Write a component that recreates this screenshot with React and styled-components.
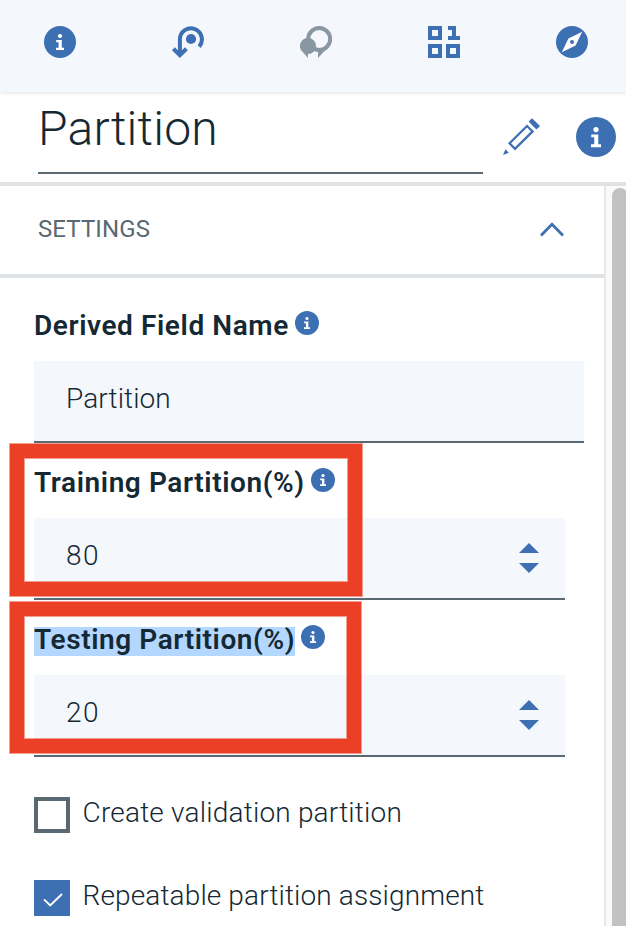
import React from 'react';
import styled, { createGlobalStyle } from 'styled-components';

const blue = '#3d70b2';
const ink = '#152935';
const slate = '#5a6872';
const mist = '#f4f7fb';
const rule = '#dfe3e6';

const Global = createGlobalStyle`
  *, *::before, *::after { box-sizing: border-box; }
  body { margin: 0; background: #fff; overflow: hidden; }
`;

const Page = styled.div`
  width: 626px;
  height: 926px;
  display: flex;
  flex-direction: column;
  overflow: hidden;
  background: #fff;
  color: ${ink};
  font-family: Roboto, 'Noto Sans', sans-serif;
`;

const Toolbar = styled.nav`
  flex: none;
  display: flex;
  justify-content: space-between;
  height: 92px;
  padding: 26px 38px 0 44px;
  background: ${mist};
  box-shadow: 0 1px 4px rgba(0, 0, 0, 0.12);
`;

const Icon = styled.svg`
  display: block;
  flex: none;
  width: ${(p) => p.$w}px;
  height: ${(p) => p.$h ?? p.$w}px;
`;

const Header = styled.header`
  flex: none;
  display: flex;
  align-items: flex-start;
  height: 94px;
  padding-left: 38px;
  border-bottom: 4px solid ${rule};
`;

const Title = styled.h1`
  width: 445px;
  height: 82px;
  margin: 0 20px 0 0;
  padding: 7px 0 0 0;
  border-bottom: 2px solid ${slate};
  font-size: 48px;
  font-weight: 350;
  line-height: 60px;
  letter-spacing: 0.2px;
`;

const HeaderAction = styled.button`
  display: block;
  margin: ${(p) => p.$top}px ${(p) => p.$gap ?? 0}px 0 0;
  padding: 0;
  border: 0;
  background: none;
`;

const Body = styled.div`
  flex: 1;
  display: flex;
  min-height: 0;
`;

const Content = styled.main`
  width: 606px;
  overflow: hidden;
  border-right: 2px solid #e7e7e7;
`;

const ScrollTrack = styled.div`
  width: 20px;
  padding: 2px 0 0 6px;
  overflow: hidden;
  background: #fafafa;
`;

const ScrollThumb = styled.div`
  width: 16px;
  height: 800px;
  border-radius: 8px;
  background: #c2c2c2;
`;

const SectionHead = styled.div`
  display: flex;
  justify-content: space-between;
  height: 92px;
  padding: 0 40px 0 38px;
  border-bottom: 4px solid ${rule};
`;

const SectionTitle = styled.h2`
  margin: 25px 0 0;
  color: ${slate};
  font-size: 24px;
  font-weight: 380;
  line-height: 36px;
  letter-spacing: 0.1px;
`;

const Chevron = styled(Icon)`
  margin-top: 36px;
`;

const Form = styled.form`
  padding: 8px 0 0 34px;
`;

const Field = styled.div`
  position: relative;
  height: 157px;
`;

const LabelRow = styled.div`
  display: flex;
  align-items: flex-start;
  gap: 6px;
  height: 75px;
  padding-top: 25px;
`;

const Label = styled.label`
  height: 29px;
  margin-top: 2px;
  background: ${(p) => (p.$selected ? '#b3d7ff' : 'transparent')};
  font-size: 28px;
  font-weight: 620;
  line-height: 25px;
  letter-spacing: 0.59px;
  white-space: nowrap;
`;

const InputBox = styled.div`
  display: flex;
  justify-content: space-between;
  width: ${(p) => (p.$wide ? 550 : 531)}px;
  height: 82px;
  padding: 0 26px 0 32px;
  border-bottom: 2px solid ${slate};
  background: ${mist};
  font-size: 28px;
  font-weight: 300;
  line-height: 76px;
  letter-spacing: ${(p) => (p.$wide ? 0.1 : 1.4)}px;
`;

const Stepper = styled.div`
  display: flex;
  flex-direction: column;
  gap: 10px;
  padding-top: 25px;
`;

const Highlight = styled.div`
  position: absolute;
  top: ${(p) => p.$top}px;
  left: -24px;
  width: ${(p) => p.$width}px;
  height: ${(p) => p.$height}px;
  border: 14px solid #ec4026;
  box-shadow: 0 0 0 1px rgba(236, 64, 38, 0.5), inset 0 0 0 1px rgba(236, 64, 38, 0.5);
  pointer-events: none;
`;

const Option = styled.label`
  display: flex;
  align-items: flex-start;
  gap: 12.5px;
  height: 36px;
  margin-top: ${(p) => p.$gap}px;
  font-size: 28px;
  font-weight: 300;
  line-height: 32px;
  letter-spacing: ${(p) => p.$tracking}px;
  white-space: nowrap;
`;

const Box = styled.span`
  display: flex;
  align-items: center;
  justify-content: center;
  width: 36px;
  height: 36px;
  padding: ${(p) => (p.$checked ? '3px 0 0 2px' : 0)};
  border: 4px solid ${(p) => (p.$checked ? blue : slate)};
  background: ${(p) => (p.$checked ? blue : '#fff')};
`;

function InfoIcon({ size }) {
  return (
    <Icon $w={size} viewBox="0 0 32 32" aria-label="Info">
      <circle cx="16" cy="16" r="16" fill={blue} />
      <circle cx="16" cy="10" r="2.1" fill="#fff" />
      <path d="M12.2 13.9h5.6v7.9h2.2v2.3h-8v-2.3h2.6v-5.6h-2.4z" fill="#fff" />
    </Icon>
  );
}

function RouteIcon() {
  return (
    <Icon $w={32} viewBox="0 0 32 32">
      <g fill="none" stroke={blue} strokeWidth="4">
        <path d="M7.9 29V13a11 11 0 1 1 19.3 7.6" />
        <path d="M1.4 22.8 7.9 29.2l6.5-6.4" />
      </g>
      <circle cx="19" cy="13" r="5.1" fill={blue} />
    </Icon>
  );
}

function CommentsIcon() {
  return (
    <Icon $w={32} viewBox="0 0 32 32">
      <circle cx="19.2" cy="13" r="11" fill="none" stroke="#8897a2" strokeWidth="4" />
      <path d="M27.8 21.4 18 32v-6.2l-3.5-.9 2-3 4 .8z" fill="#8897a2" />
      <path d="M8 12a8 8 0 1 1 0 16v4l-5.7-6.4A8 8 0 0 1 8 12z" fill="#8897a2" />
    </Icon>
  );
}

function DataIcon() {
  return (
    <Icon $w={32} viewBox="0 0 32 32">
      <path
        fill={blue}
        fillRule="evenodd"
        d="M0 0h14v14H0zM4 4v6h6V4zM0 18h14v14H0zM4 22v6h6v-6zM18 18h14v14H18zM22 22v6h6v-6zM20 0h8v10h4v4H20v-4h4V4h-4z"
      />
    </Icon>
  );
}

function CompassIcon() {
  return (
    <Icon $w={32} viewBox="0 0 32 32">
      <circle cx="16" cy="16" r="16" fill={blue} />
      <path d="M26.2 5.8 19.6 19.4 5.8 26.2 12.4 12.6z" fill="#fff" />
      <circle cx="16" cy="16" r="2" fill={blue} />
    </Icon>
  );
}

function PencilIcon() {
  return (
    <Icon $w={38} viewBox="0 0 38 38">
      <path d="M6.6 25.3 24 8l5.6 5.4L12 30.8z" fill="none" stroke={blue} strokeWidth="2.3" />
      <path d="M25.6 3.6 29 0.2 37 8 33.4 11.6z" fill={blue} />
      <path d="M2.4 31.2 5.9 34.8 0 37z" fill={blue} />
    </Icon>
  );
}

function Arrow({ down }) {
  return (
    <Icon $w={20} $h={10} viewBox="0 0 20 10">
      <path d={down ? 'M0 0h20L10 10z' : 'M0 10h20L10 0z'} fill={blue} />
    </Icon>
  );
}

function PartitionField({ label, value, numeric, selected, children }) {
  return (
    <Field>
      <LabelRow>
        <Label $selected={selected}>{label}</Label>
        <InfoIcon size={24} />
      </LabelRow>
      <InputBox $wide={!numeric}>
        {value}
        {numeric && (
          <Stepper>
            <Arrow />
            <Arrow down />
          </Stepper>
        )}
      </InputBox>
      {children}
    </Field>
  );
}

export default function App() {
  return (
    <>
      <Global />
      <Page>
        <Toolbar>
          <InfoIcon size={32} />
          <RouteIcon />
          <CommentsIcon />
          <DataIcon />
          <CompassIcon />
        </Toolbar>
        <Header>
          <Title>Partition</Title>
          <HeaderAction $top={26} $gap={35} aria-label="Edit">
            <PencilIcon />
          </HeaderAction>
          <HeaderAction $top={25} aria-label="About">
            <InfoIcon size={40} />
          </HeaderAction>
        </Header>
        <Body>
          <Content>
            <SectionHead>
              <SectionTitle>SETTINGS</SectionTitle>
              <Chevron $w={24} $h={15} viewBox="0 0 24 15">
                <path d="M1 13.4 12 2.2l11 11.2" fill="none" stroke={blue} strokeWidth="2.8" />
              </Chevron>
            </SectionHead>
            <Form>
              <PartitionField label="Derived Field Name" value="Partition" />
              <PartitionField label="Training Partition(%)" value="80" numeric>
                <Highlight $top={1} $width={352} $height={152} />
              </PartitionField>
              <PartitionField label="Testing Partition(%)" value="20" numeric selected>
                <Highlight $top={2} $width={351} $height={151} />
              </PartitionField>
              <Option $gap={40} $tracking={0.2}>
                <Box />
                Create validation partition
              </Option>
              <Option $gap={47} $tracking={0.13}>
                <Box $checked>
                  <Icon $w={20} $h={14} viewBox="0 0 20 14">
                    <path d="M1 6.4 7.2 12.4 19 1" fill="none" stroke="#fff" strokeWidth="2" />
                  </Icon>
                </Box>
                Repeatable partition assignment
              </Option>
            </Form>
          </Content>
          <ScrollTrack>
            <ScrollThumb />
          </ScrollTrack>
        </Body>
      </Page>
    </>
  );
}
